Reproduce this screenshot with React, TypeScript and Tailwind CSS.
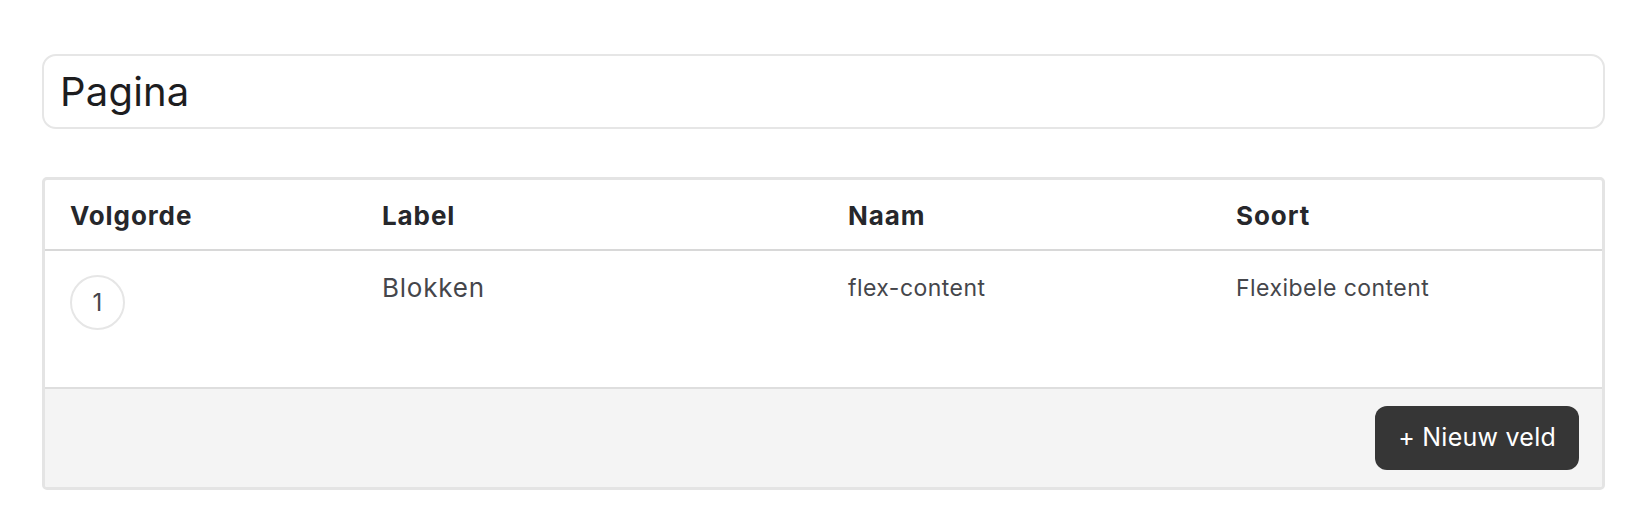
import React from "react";

const fields = [
  { order: 1, label: "Blokken", name: "flex-content", type: "Flexibele content" },
];

const App = () => {
  return (
    <section
      className="min-h-screen bg-white pl-[42px] pr-[23px] pt-[54px]"
      style={{ fontFamily: "Inter, 'Noto Sans', sans-serif" }}
    >
      <input
        readOnly
        defaultValue="Pagina"
        className="block h-[75px] w-full rounded-[14px] border-2 border-[#e6e6e6] bg-white px-[16px] text-[40px] tracking-[0.005em] text-[#1d1d1f] outline-none"
      />

      <div className="mt-[48px] overflow-hidden rounded-[5px] border-[3px] border-[#e4e4e4]">
        <div className="grid h-[71px] grid-cols-[312px_466px_388px_1fr] items-center border-b-2 border-[#d8d8d8] pt-[2px] text-[26px] font-bold tracking-[0.035em] text-[#26272b]">
          <div className="pl-[25px]">Volgorde</div>
          <div className="pl-[25px]">Label</div>
          <div className="pl-[25px]">Naam</div>
          <div className="pl-[25px]">Soort</div>
        </div>

        {fields.map((field) => (
          <div
            key={field.name}
            className="grid h-[136px] grid-cols-[312px_466px_388px_1fr] items-start text-[#45464b]"
          >
            <div className="pl-[25px] pt-[24px]">
              <div className="flex h-[55px] w-[55px] items-center justify-center rounded-full border-2 border-[#e6e6e6] text-[24px]">
                {field.order}
              </div>
            </div>
            <div className="pl-[25px] pt-[21px] text-[26px] leading-8 tracking-[0.03em]">{field.label}</div>
            <div className="pl-[25px] pt-[23px] text-[23px] leading-7 tracking-[0.02em]">{field.name}</div>
            <div className="pl-[25px] pt-[23px] text-[23px] leading-7 tracking-[0.02em]">{field.type}</div>
          </div>
        ))}

        <div className="flex justify-end border-t-2 border-[#dedede] bg-[#f4f4f4] py-[17px] pr-[23px]">
          <button className="h-[64px] rounded-[12px] bg-[#363636] px-[23px] text-[25px] tracking-[0.01em] text-white">
            + Nieuw veld
          </button>
        </div>
      </div>
    </section>
  );
};

export default App;
